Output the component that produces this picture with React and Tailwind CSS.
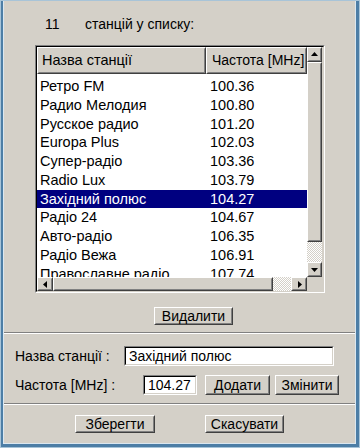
import React from 'react';

const stations = [
  ['Ретро FM', '100.36'],
  ['Радио Мелодия', '100.80'],
  ['Русское радио', '101.20'],
  ['Europa Plus', '102.03'],
  ['Супер-радіо', '103.36'],
  ['Radio Lux', '103.79'],
  ['Західний полюс', '104.27'],
  ['Радіо 24', '104.67'],
  ['Авто-радіо', '106.35'],
  ['Радіо Вежа', '106.91'],
  ['Православне радіо', '107.74'],
];

const stipple = 'bg-[repeating-conic-gradient(#d4d0c8_0_25%,#ffffff_0_50%)] bg-[length:2px_2px]';

function Raised({ children, className = '' }) {
  return (
    <div className={`border border-t-white border-l-white border-r-[#404040] border-b-[#404040] bg-[#d4d0c8] ${className}`}>
      <div className="h-full w-full border border-t-[#d4d0c8] border-l-[#d4d0c8] border-r-[#808080] border-b-[#808080] flex items-center justify-center">
        {children}
      </div>
    </div>
  );
}

function Sunken({ children, className = '' }) {
  return (
    <div className={`border border-t-[#808080] border-l-[#808080] border-r-white border-b-white ${className}`}>
      <div className="h-full w-full border border-t-black border-l-black border-r-[#d4d0c8] border-b-[#d4d0c8] bg-white">
        {children}
      </div>
    </div>
  );
}

function Arrow({ dir }) {
  const pts = {
    up: '1,6 4.5,2 8,6',
    down: '1,3 4.5,7 8,3',
    left: '6,1 2,4.5 6,8',
    right: '3,1 7,4.5 3,8',
  }[dir];
  return (
    <svg width="9" height="9" viewBox="0 0 9 9">
      <polygon points={pts} fill="#000" />
    </svg>
  );
}

export default function App() {
  return (
    <div
      className="w-[360px] h-[448px] bg-[#a8c4d8] pt-[1px] px-[1px] pb-[1px] text-black"
      style={{ fontFamily: '"Liberation Sans", Arial, sans-serif' }}
    >
      <div className="h-full bg-[#4d7ea6] pl-[2px] pr-[3px] pb-[3px]">
        <div className="h-full bg-[#dbe7f0] pl-[1px] pr-[1px] pb-[1px]">
          <div className="h-full bg-[#d4d0c8] flex flex-col text-[14px]">
            {/* count label */}
            <div className="h-[44px] flex items-center pl-[41px] pt-[2px]">
              <span className="w-[40px]">11</span>
              <span>станцій у списку:</span>
            </div>

            {/* list box */}
            <div className="ml-[31px] w-[290px] h-[248px] border border-t-[#808080] border-l-[#808080] border-r-white border-b-white">
              <div className="h-full border border-t-black border-l-black border-r-[#d4d0c8] border-b-[#d4d0c8] flex flex-col">
                <div className="flex h-[230px]">
                  <div className="w-[270px] flex flex-col bg-white overflow-hidden">
                    <div className="flex h-[27px] shrink-0">
                      <Raised className="w-[169px] h-full">
                        <span className="w-full pl-[3px] text-[14.5px]">Назва станції</span>
                      </Raised>
                      <Raised className="w-[101px] h-full">
                        <span className="w-full pl-[4px] text-[14px] whitespace-nowrap overflow-hidden">Частота [MHz]</span>
                      </Raised>
                    </div>
                    <div className="flex flex-col pt-[3px]">
                      {stations.map(([name, freq], i) => (
                        <div
                          key={name}
                          className={`flex h-[18.75px] shrink-0 items-center text-[14.5px] leading-none ${i === 6 ? 'bg-[#000080] text-white' : ''}`}
                        >
                          <span className="w-[169px] pl-[3px] whitespace-nowrap">{name}</span>
                          <span className="pl-[4px]">{freq}</span>
                        </div>
                      ))}
                    </div>
                  </div>
                  <div className="w-[15px] flex flex-col bg-[#d4d0c8]">
                    <Raised className="h-[15px] shrink-0"><Arrow dir="up" /></Raised>
                    <Raised className="h-[180px] shrink-0" />
                    <div className={`flex-1 ${stipple}`} />
                    <Raised className="h-[15px] shrink-0"><Arrow dir="down" /></Raised>
                  </div>
                </div>
                <div className="flex h-[15px]">
                  <div className="w-[270px] flex">
                    <Raised className="w-[16px] shrink-0"><Arrow dir="left" /></Raised>
                    <Raised className="w-[220px] shrink-0" />
                    <div className={`flex-1 ${stipple}`} />
                    <Raised className="w-[16px] shrink-0"><Arrow dir="right" /></Raised>
                  </div>
                  <div className="w-[15px] bg-[#d4d0c8]" />
                </div>
              </div>
            </div>

            <div className="flex justify-center pt-[14px] pl-[28px]">
              <Raised className="w-[79px] h-[18px]">
                <span className="leading-none">Видалити</span>
              </Raised>
            </div>

            <div className="mt-[7px] h-[2px] border-t border-t-[#808080] border-b border-b-white" />

            <div className="flex items-center h-[20px] mt-[12px] pl-[11px]">
              <span className="w-[109px] whitespace-nowrap">Назва станції :</span>
              <Sunken className="w-[210px] h-[20px]">
                <div className="h-full flex items-center pl-[3px] leading-none">Західний полюс</div>
              </Sunken>
            </div>

            <div className="flex items-center h-[20px] mt-[9px] pl-[11px]">
              <span className="w-[128px] whitespace-nowrap">Частота [MHz] :</span>
              <Sunken className="w-[54px] h-[20px]">
                <div className="h-full flex items-center pl-[3px] leading-none">104.27</div>
              </Sunken>
              <Raised className="w-[65px] h-[20px] ml-[8px]">
                <span className="leading-none">Додати</span>
              </Raised>
              <Raised className="w-[64px] h-[20px] ml-[5px]">
                <span className="leading-none">Змінити</span>
              </Raised>
            </div>

            <div className="mt-[8px] h-[2px] border-t border-t-[#808080] border-b border-b-white" />

            <div className="flex mt-[10px] h-[18px] pl-[71px]">
              <Raised className="w-[80px] h-[18px]">
                <span className="leading-none">Зберегти</span>
              </Raised>
              <Raised className="w-[79px] h-[18px] ml-[50px]">
                <span className="leading-none">Скасувати</span>
              </Raised>
            </div>
          </div>
        </div>
      </div>
    </div>
  );
}
